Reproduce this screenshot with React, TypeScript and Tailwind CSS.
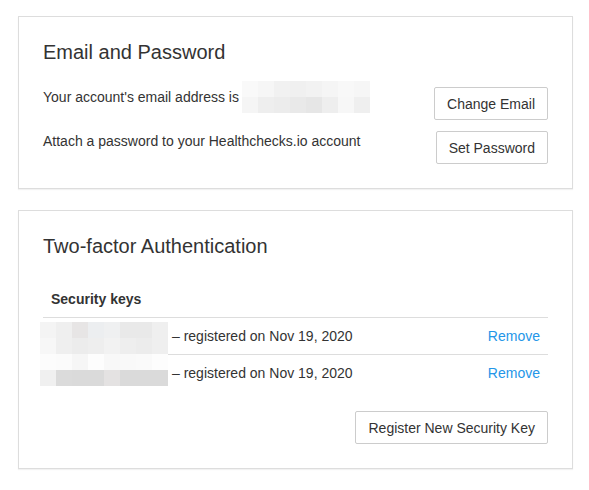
import React from 'react';

const emailBlob = [
  ['#f9f9f9', '#f6f6f6', '#f1f1f1', '#f0f0f0', '#f2f2f2', '#f5f5f5', '#f8f8f8', '#f6f6f6'],
  ['#f5f5f5', '#eeeeee', '#ececec', '#e9e9e9', '#e6e6e6', '#eeeeee', '#f7f7f7', '#efefef'],
];

const keysBlob = [
  ['#f4f4f4', '#efefef', '#e7e5e5', '#eceef0', '#eff0f1', '#e9e9e9', '#e9e9e9', '#efefef'],
  ['#f7f7f7', '#efefef', '#ececec', '#eeeeee', '#f2f2f2', '#eeeeee', '#ececec', '#efefef'],
  ['#fcfcfc', '#fbfbfb', '#f6f6f6', '#fdfdfd', '#f8f8f8', '#f9f9f9', '#fafafa', '#fdfdfd'],
  ['#f0f0f0', '#dbdbdb', '#dadada', '#dadada', '#e4e2e2', '#dadada', '#dadada', '#dadada'],
];

// pixelated redaction, 16px cells
const Blob = ({ rows, className = '' }: { rows: string[][]; className?: string }) => (
  <span className={`grid grid-cols-8 w-32 ${className}`}>
    {rows.flat().map((c, i) => (
      <span key={i} className="h-4" style={{ backgroundColor: c }} />
    ))}
  </span>
);

const Button = ({ children }: { children: React.ReactNode }) => (
  <button className="h-[33px] px-3 border border-[#cccccc] rounded-[2px] bg-white text-[#333] text-sm leading-5 whitespace-nowrap">
    {children}
  </button>
);

const keys = ['Nov 19, 2020', 'Nov 19, 2020'];

export default function App() {
  return (
    <div className="min-h-screen bg-white pt-4 pl-[18px] pr-[16px] text-[#333] text-sm leading-5 font-['Liberation_Sans',Arial,sans-serif]">
      {/* Email and Password */}
      <div className="border border-[#dddddd] shadow-[0_1px_1px_rgba(0,0,0,0.05)] p-6">
        <h2 className="text-xl leading-[22px] font-normal mb-6">Email and Password</h2>
        <div className="flex justify-between items-start">
          <p className="flex items-center h-5">
            Your account's email address is
            <Blob rows={emailBlob} className="ml-[3px] -my-1.5 shrink-0" />
          </p>
          <Button>Change Email</Button>
        </div>
        <div className="flex justify-between items-start mt-[11px]">
          <p>Attach a password to your Healthchecks.io account</p>
          <Button>Set Password</Button>
        </div>
      </div>

      {/* Two-factor */}
      <div className="mt-[21px] border border-[#dddddd] shadow-[0_1px_1px_rgba(0,0,0,0.05)] p-6">
        <h2 className="text-xl leading-[22px] font-normal mb-6">Two-factor Authentication</h2>
        <div className="relative">
          <table className="w-full border-collapse">
            <thead>
              <tr>
                <th className="text-left font-bold p-2" colSpan={2}>Security keys</th>
              </tr>
            </thead>
            <tbody>
              {keys.map((d, i) => (
                <tr key={i} className="border-t border-[#dddddd]">
                  <td className="p-2">
                    <span className="inline-block w-[121px]" />– registered on {d}
                  </td>
                  <td className="p-2 text-right">
                    <a href="#" className="text-[#2496e8]">Remove</a>
                  </td>
                </tr>
              ))}
            </tbody>
          </table>
          <Blob rows={keysBlob} className="absolute left-[-3px] top-[41px]" />
        </div>
        <div className="flex justify-end mt-5">
          <Button>Register New Security Key</Button>
        </div>
      </div>
    </div>
  );
}
